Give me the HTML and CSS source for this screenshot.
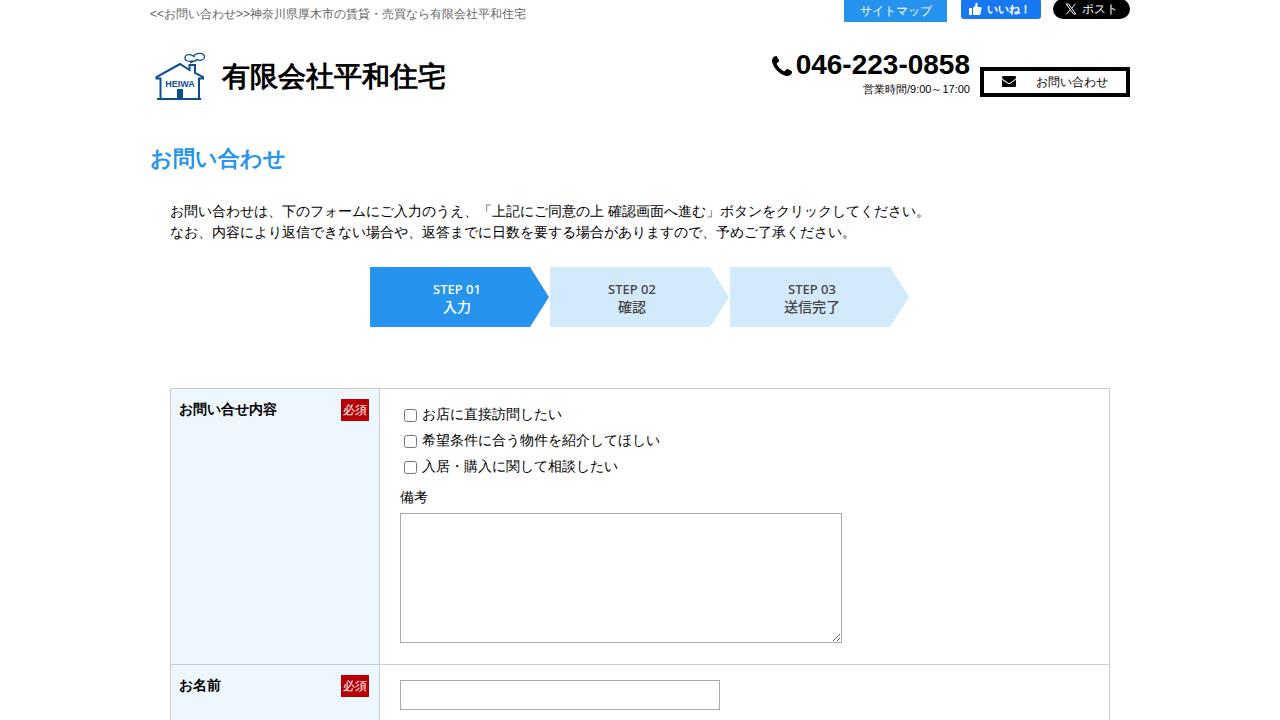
FILE: index.html
```html
<!DOCTYPE html>
<html lang="ja">
<head>
<meta charset="utf-8">
<meta name="viewport" content="width=device-width, initial-scale=1">
<title>お問い合わせ</title>
<link rel="stylesheet" href="styles.css">
</head>
<body>
<div class="page">
  <header>
    <div class="topbar">
      <p class="tagline">&lt;&lt;お問い合わせ&gt;&gt;神奈川県厚木市の賃貸・売買なら有限会社平和住宅</p>
      <a class="sitemap" href="#">サイトマップ</a>
      <button class="social like" type="button">
        <svg width="14" height="14" viewBox="0 0 14 14" aria-hidden="true"><path fill="#fff" d="M1 6h3v7H1zM5 6l2.500-2.500V1.500Q7.500.3 8.600.8q1.600.8.800 4.200h3.100q1.200 0 1 1.300l-.9 5.500q-.2 1.200-1.500 1.200H5z"/></svg>
        いいね！
      </button>
      <button class="social post" type="button">
        <svg width="12" height="12" viewBox="0 0 12 12" aria-hidden="true"><path fill="none" stroke="#fff" d="M1.200 1h2.300l7.300 10H8.500zM10.500.8 6.700 5.300M5.300 6.800 1.400 11.200"/></svg>
        ポスト
      </button>
    </div>
    <div class="masthead">
      <a class="brand" href="#">
        <svg class="logo" width="56" height="54" viewBox="0 0 56 54" aria-hidden="true">
          <g fill="none" stroke="#0b4f92">
            <path stroke-width="2" d="M8.500 53V32.500H4.500V31L28 18l9.500 6V19H43v8l8 4v1.500h-4V53M5 53h44"/>
            <path stroke-width="1.300" d="M38 17l3-2c-4 1-8 0-8-3 0-4 6-4.500 9-1.500 1-4.500 11-4 10.500.5-.5 3.500-5 4-7.500 2.500-1.500 2-4 1.500-7 3.500"/>
          </g>
          <path fill="#0b4f92" d="M25 43h6v10h-6z"/>
          <text x="28" y="41" text-anchor="middle" fill="#0b4f92" class="logo-text">HEIWA</text>
        </svg>
        <span>有限会社平和住宅</span>
      </a>
      <div class="phone">
        <p class="number">
          <svg width="20" height="20" viewBox="0 0 1408 1408" aria-hidden="true"><path d="M1408 1112q0 27-10 70.500t-20.500 68.500q-21 50-122 106-94 51-186 51-27 0-53-3.500t-57.500-12.500-47-14.500-55.500-20.500-49-18q-98-35-175-83-127-79-264-216t-216-264q-48-77-83-175-3-9-18-49t-20.500-55.500-14.500-47-12.500-57.500-3.500-53q0-92 51-186 56-101 106-122 25-10 68.500-20.500t70.500-10.500q14 0 21 3 18 6 53 76 11 19 30 54t35 63.500 31 53.500q3 4 17.500 25t21.500 35.500 7 28.500q0 20-28.500 50t-62 55-62 53-28.500 46q0 9 5 22.500t8.500 20.500 14 24 11.500 19q76 137 174 235t235 174q2 1 19 11.500t24 14 20.500 8.500 22.500 5q18 0 46-28.500t53-62 55-62 50-28.500q14 0 28.500 7t35.500 21.500 25 17.500q25 15 53.500 31t63.500 35 54 30q70 35 76 53 3 7 3 21z"/></svg>
          046-223-0858
        </p>
        <p class="hours">営業時間/9:00～17:00</p>
      </div>
      <a class="contact" href="#">
        <svg width="14" height="11" viewBox="0 256 1792 1408" aria-hidden="true"><path d="M1792 710v794q0 66-47 113t-113 47h-1472q-66 0-113-47t-47-113v-794q44 49 101 87 362 246 497 345 57 42 92.500 65.500t94.500 48 110 24.500h2q51 0 110-24.500t94.500-48 92.500-65.500q170-123 498-345 57-39 100-87zm0-294q0 79-49 151t-122 123q-376 261-468 325-10 7-42.500 31t-54 38.500-52 32.500-57.500 27-50 9h-2q-23 0-50-9t-57.500-27-52-32.500-54-38.500-42.500-31q-91-64-262-182.500t-205-142.500q-62-42-117-115.500t-55-136.500q0-78 41.500-130t118.500-52h1472q65 0 112.500 47t47.500 113z"/></svg>
        お問い合わせ
      </a>
    </div>
  </header>
  <main>
    <h1>お問い合わせ</h1>
    <div class="content">
      <p class="lead">お問い合わせは、下のフォームにご入力のうえ、「上記にご同意の上 確認画面へ進む」ボタンをクリックしてください。<br>なお、内容により返信できない場合や、返答までに日数を要する場合がありますので、予めご了承ください。</p>
      <ol class="steps">
        <li class="step current"><span>STEP 01</span><b>入力</b></li>
        <li class="step"><span>STEP 02</span><b>確認</b></li>
        <li class="step"><span>STEP 03</span><b>送信完了</b></li>
      </ol>
      <form>
        <table class="form-table">
          <tr>
            <th scope="row"><div class="label"><span>お問い合せ内容</span><em>必須</em></div></th>
            <td>
              <div class="checks">
                <label><input type="checkbox">お店に直接訪問したい</label>
                <label><input type="checkbox">希望条件に合う物件を紹介してほしい</label>
                <label><input type="checkbox">入居・購入に関して相談したい</label>
              </div>
              <label class="note" for="note">備考</label>
              <textarea id="note"></textarea>
            </td>
          </tr>
          <tr>
            <th scope="row"><div class="label"><label for="name">お名前</label><em>必須</em></div></th>
            <td><input class="text" id="name" type="text"></td>
          </tr>
        </table>
      </form>
    </div>
  </main>
</div>
</body>
</html>
```
FILE: styles.css
```css
* { box-sizing: border-box; }
body {
  margin: 0;
  background: #fff;
  color: #000;
  font: 14px/21px "Liberation Sans", sans-serif;
}
p, h1, ol { margin: 0; padding: 0; }
a { color: inherit; text-decoration: none; }
button, input, textarea { font: inherit; }
svg { flex: none; }
.page { max-width: 980px; margin: 0 auto; }

.topbar { display: flex; align-items: flex-start; height: 22px; font-size: 12px; }
.tagline { flex: 1; padding-top: 4px; line-height: 20px; color: #666; }
.sitemap {
  width: 103px;
  margin-right: 14px;
  background: #2694ee;
  color: #fff;
  line-height: 22px;
  text-align: center;
}
.social {
  display: flex;
  align-items: center;
  justify-content: center;
  gap: 5px;
  height: 20px;
  margin-top: -1px;
  padding: 0;
  border: 0;
  color: #fff;
}
.like { width: 80px; margin-right: 12px; padding-right: 4px; border-radius: 3px; background: #1877f2; font-size: 11px; font-weight: bold; }
.post { width: 77px; border-radius: 10px; background: #000; }

.masthead { display: flex; align-items: flex-end; gap: 10px; padding-top: 23px; }
.brand {
  display: flex;
  flex: 1;
  align-items: center;
  gap: 14px;
  padding-left: 2px;
  font-size: 28px;
  line-height: 48px;
  font-weight: bold;
}
.brand span { padding-top: 8px; }
.logo-text { font: bold 9px/1 "Liberation Sans Narrow", "Liberation Sans", sans-serif; }
.phone { text-align: right; padding-bottom: 4px; }
.number {
  display: flex;
  align-items: center;
  gap: 4px;
  font-size: 28px;
  line-height: 32px;
  font-weight: bold;
}
.number svg { margin-top: 2px; }
.hours { font-size: 11px; line-height: 16px; }
.contact {
  display: flex;
  align-items: center;
  gap: 20px;
  width: 150px;
  height: 30px;
  margin-bottom: 4px;
  padding-left: 18px;
  border: 4px solid #000;
  font-size: 12px;
}
.contact svg { margin-bottom: 1px; }

h1 { padding-top: 42px; color: #2694ee; font-size: 22px; line-height: 32px; }
.content { padding: 26px 20px 20px; }
.steps { display: flex; justify-content: center; margin: 24px 0 61px; list-style: none; }
.step {
  width: 180px;
  height: 60px;
  padding: 13px 16px 0 0;
  background: #d3e9fc;
  clip-path: polygon(0 0, 160px 0, 179px 50%, 160px 100%, 0 100%);
  color: #444;
  font-family: "Noto Sans", "Noto Sans CJK JP", sans-serif;
  text-align: center;
}
.step span, .step b { display: block; font-weight: 500; line-height: 18px; }
.step span { font-size: 13px; }
.step b { font-size: 14px; }
.step.current { padding-right: 6px; background: #2694ee; color: #fff; }

.form-table { width: 100%; border-collapse: collapse; }
th, td { border: 1px solid #ccc; vertical-align: top; }
th { width: 209px; padding: 10px 10px 10px 8px; background: #eef6fe; text-align: left; }
td { padding: 12px 20px 21px; }
.label { display: flex; justify-content: space-between; }
em {
  padding: 0 2px;
  background: #b60005;
  color: #fff;
  font-size: 12px;
  font-style: normal;
  font-weight: normal;
  line-height: 22px;
}
.checks label { display: flex; align-items: center; height: 26px; }
.checks { padding-bottom: 8px; }
.checks input { width: 13px; height: 13px; margin: 2px 5px 0 4px; }
.note { display: block; margin-bottom: 5px; }
textarea { display: block; width: 442px; max-width: 100%; height: 130px; border: 1px solid #a9a9a9; }
.text { display: block; width: 320px; height: 30px; margin-top: 3px; border: 1px solid #a9a9a9; }
```
